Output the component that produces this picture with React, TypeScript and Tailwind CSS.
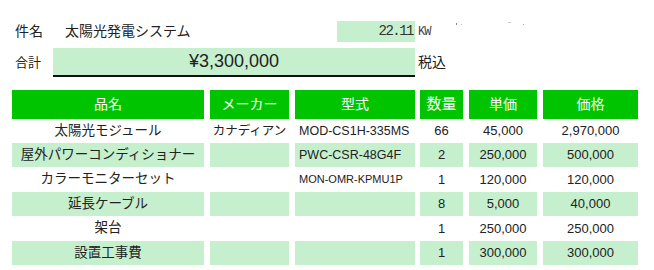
const rows = [
  { name: "太陽光モジュール", maker: "カナディアン", model: "MOD-CS1H-335MS", qty: "66", unit: "45,000", price: "2,970,000", green: false, h: "h-[24px]" },
  { name: "屋外パワーコンディショナー", maker: "", model: "PWC-CSR-48G4F", qty: "2", unit: "250,000", price: "500,000", green: true, h: "h-[24px]" },
  { name: "カラーモニターセット", maker: "", model: "MON-OMR-KPMU1P", qty: "1", unit: "120,000", price: "120,000", green: false, h: "h-[25px]", small: true },
  { name: "延長ケーブル", maker: "", model: "", qty: "8", unit: "5,000", price: "40,000", green: true, h: "h-[24px]" },
  { name: "架台", maker: "", model: "", qty: "1", unit: "250,000", price: "250,000", green: false, h: "h-[25px]" },
  { name: "設置工事費", maker: "", model: "", qty: "1", unit: "300,000", price: "300,000", green: true, h: "h-[24px]" },
];

const jp = "font-['Liberation_Sans','Noto_Sans_CJK_JP',sans-serif]";

export default function App() {
  return (
    <div className={`w-[654px] h-[270px] bg-white pt-[21px] text-[#222] ${jp}`}>
      {/* 件名 */}
      <div className="flex h-[21px] items-center">
        <span className="ml-[15px] w-[50px] text-[14px]">件名</span>
        <span className="w-[272px] text-[14px]">太陽光発電システム</span>
        <span className="flex h-full w-[78px] items-center justify-end bg-[#c6efce] pr-[2px] font-['Liberation_Mono',monospace] text-[14px] tracking-[-1.5px] text-[#333]">
          22.11
        </span>
        <span className="ml-[3px] font-['Liberation_Mono',monospace] text-[12px] tracking-[-1px] text-[#444]">KW</span>
        <span className="relative ml-[8px] h-full w-[120px]">
          <span className="absolute left-[18px] top-[2px] h-[2px] w-px bg-[#888]" />
          <span className="absolute left-[23px] top-[3px] h-px w-px bg-[#bbb]" />
          <span className="absolute left-[70px] top-[1px] h-px w-[3px] bg-[#ccc]" />
          <span className="absolute left-[85px] top-[3px] h-px w-px bg-[#aaa]" />
        </span>
      </div>

      {/* 合計 */}
      <div className="mt-[6px] flex h-[29px] items-center">
        <span className="ml-[15px] w-[38px] text-[13px]">合計</span>
        <span className="flex h-full w-[362px] items-center justify-center border-b-2 border-[#111] bg-[#c6efce] text-[18px]">
          ¥3,300,000
        </span>
        <span className="ml-[3px] text-[14px]">税込</span>
      </div>

      {/* 明細 */}
      <div className="ml-[12px] mt-[13px] flex flex-col whitespace-nowrap">
        <div className="flex h-[29px] text-[14px] text-white">
          <div className="flex w-[192px] items-center justify-center bg-[#00c400]">品名</div>
          <div className="ml-[6px] flex w-[79px] items-center justify-center bg-[#00c400]">メーカー</div>
          <div className="ml-[6px] flex w-[120px] items-center justify-center bg-[#00c400]">型式</div>
          <div className="ml-[5px] flex w-[43px] items-center justify-center bg-[#00c400] text-[15px]">数量</div>
          <div className="ml-[6px] flex w-[68px] items-center justify-center bg-[#00c400]">単価</div>
          <div className="ml-[6px] flex w-[95px] items-center justify-center bg-[#00c400]">価格</div>
        </div>
        {rows.map((r) => {
          const bg = r.green ? "bg-[#c6efce]" : "bg-white";
          return (
            <div key={r.name} className={`flex ${r.h} text-[13px]`}>
              <div className={`flex w-[192px] items-center justify-center text-[13.5px] ${bg}`}>{r.name}</div>
              <div className={`ml-[6px] flex w-[79px] items-center justify-center text-[12.5px] ${bg}`}>{r.maker}</div>
              <div className={`ml-[6px] flex w-[120px] items-center pl-[4px] ${r.small ? "text-[11px]" : "text-[12.5px]"} ${bg}`}>
                {r.model}
              </div>
              <div className={`ml-[5px] flex w-[43px] items-center justify-center ${bg}`}>{r.qty}</div>
              <div className={`ml-[6px] flex w-[68px] items-center justify-center ${bg}`}>{r.unit}</div>
              <div className={`ml-[6px] flex w-[95px] items-center justify-center ${bg}`}>{r.price}</div>
            </div>
          );
        })}
      </div>
    </div>
  );
}
